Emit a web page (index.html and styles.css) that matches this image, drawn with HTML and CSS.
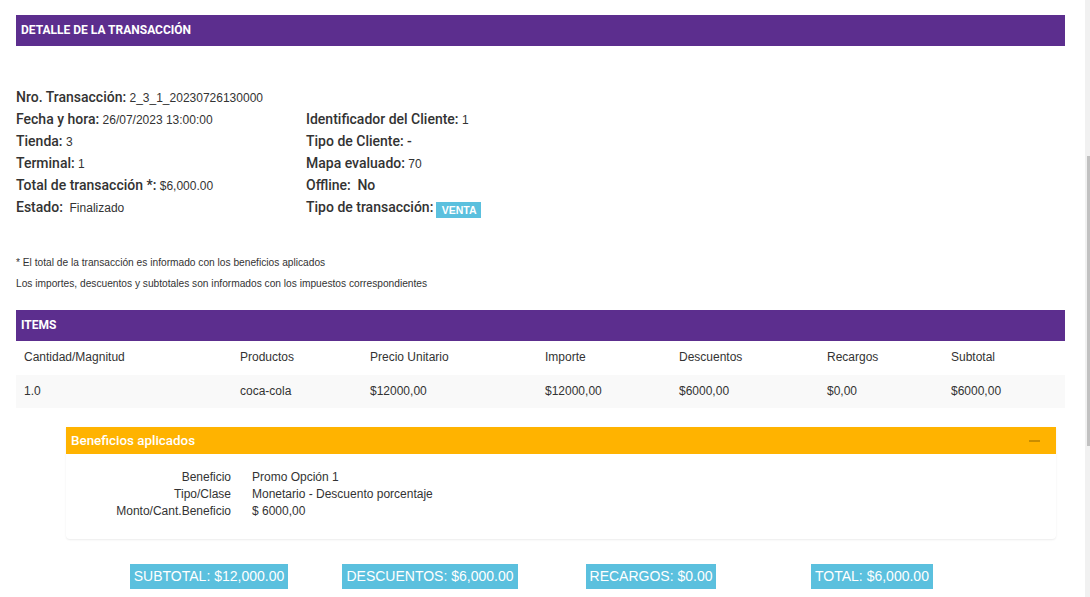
FILE: index.html
```html
<!DOCTYPE html>
<html lang="es">
<head>
<meta charset="utf-8">
<title>Detalle de la transacción</title>
<link rel="stylesheet" href="styles.css">
</head>
<body>
<div class="page">
  <main class="content">
    <div class="bar">DETALLE DE LA TRANSACCIÓN</div>

    <div class="info">
      <div class="info-col">
        <div class="row"><span class="lbl">Nro. Transacción:</span> <span class="val">2_3_1_20230726130000</span></div>
        <div class="row"><span class="lbl">Fecha y hora:</span> <span class="val">26/07/2023 13:00:00</span></div>
        <div class="row"><span class="lbl">Tienda:</span> <span class="val">3</span></div>
        <div class="row"><span class="lbl">Terminal:</span> <span class="val">1</span></div>
        <div class="row"><span class="lbl">Total de transacción *:</span> <span class="val">$6,000.00</span></div>
        <div class="row"><span class="lbl">Estado:</span>&nbsp; <span class="val">Finalizado</span></div>
      </div>
      <div class="info-col info-col-right">
        <div class="row"><span class="lbl">Identificador del Cliente:</span> <span class="val">1</span></div>
        <div class="row"><span class="lbl">Tipo de Cliente:</span> <span class="lbl">-</span></div>
        <div class="row"><span class="lbl">Mapa evaluado:</span> <span class="val">70</span></div>
        <div class="row"><span class="lbl">Offline:</span>&nbsp; <span class="lbl">No</span></div>
        <div class="row"><span class="lbl">Tipo de transacción:</span> <span class="badge">VENTA</span></div>
      </div>
    </div>

    <div class="notes">
      <p>* El total de la transacción es informado con los beneficios aplicados</p>
      <p>Los importes, descuentos y subtotales son informados con los impuestos correspondientes</p>
    </div>

    <div class="bar">ITEMS</div>
    <div class="table">
      <div class="trow thead">
        <div>Cantidad/Magnitud</div>
        <div>Productos</div>
        <div>Precio Unitario</div>
        <div>Importe</div>
        <div>Descuentos</div>
        <div>Recargos</div>
        <div>Subtotal</div>
      </div>
      <div class="trow tbody">
        <div>1.0</div>
        <div>coca-cola</div>
        <div>$12000,00</div>
        <div>$12000,00</div>
        <div>$6000,00</div>
        <div>$0,00</div>
        <div>$6000,00</div>
      </div>
    </div>

    <section class="benefits">
      <div class="benefits-head">
        <span class="benefits-title">Beneficios aplicados</span>
        <span class="minus"></span>
      </div>
      <dl class="benefits-body">
        <dt>Beneficio</dt><dd>Promo Opción 1</dd>
        <dt>Tipo/Clase</dt><dd>Monetario - Descuento porcentaje</dd>
        <dt>Monto/Cant.Beneficio</dt><dd>$ 6000,00</dd>
      </dl>
    </section>

    <div class="totals">
      <div class="cell"><span class="total">SUBTOTAL: $12,000.00</span></div>
      <div class="cell"><span class="total">DESCUENTOS: $6,000.00</span></div>
      <div class="cell"><span class="total">RECARGOS: $0.00</span></div>
      <div class="cell"><span class="total">TOTAL: $6,000.00</span></div>
    </div>
  </main>
  <div class="scrollbar"><div class="thumb"></div></div>
</div>
</body>
</html>
```

FILE: styles.css
```css
* { box-sizing: border-box; }

html, body {
  margin: 0;
  padding: 0;
  height: 100%;
  overflow: hidden;
  background: #fff;
}

body {
  font-family: "Liberation Sans", Arial, sans-serif;
  font-size: 12px;
  color: #333;
}

.page {
  display: flex;
  height: 597px;
}

.content {
  flex: 1;
  padding: 15px 20px 0 16px;
  min-width: 0;
}

.bar {
  background: #5c2e8e;
  color: #fff;
  font-family: Roboto, "Liberation Sans", sans-serif;
  font-weight: 700;
  font-size: 12px;
  height: 31px;
  line-height: 31px;
  padding-left: 5px;
}

.info {
  display: grid;
  grid-template-columns: 290px 1fr;
  margin-top: 40px;
}

.info-col-right { padding-top: 22px; }

.row {
  height: 22px;
  line-height: 22px;
  white-space: nowrap;
}

.lbl {
  font-family: Roboto, "Liberation Sans", sans-serif;
  font-weight: 500;
  font-size: 14px;
  color: #333;
}

.val { font-size: 12px; }

.badge {
  display: inline-block;
  background: #5bc0de;
  color: #fff;
  font-weight: 700;
  font-size: 10.5px;
  line-height: 16px;
  height: 16px;
  padding: 0 5px 0 6px;
  vertical-align: -2px;
  margin-left: -1px;
}

.notes {
  margin-top: 34px;
  margin-bottom: 16px;
  font-size: 10.2px;
}

.notes p {
  margin: 0;
  line-height: 21px;
}

.table { font-size: 12px; }

.trow {
  display: grid;
  grid-template-columns: 216px 130px 175px 134px 148px 124px 1fr;
}

.trow > div { padding-left: 8px; }

.thead {
  height: 34px;
  line-height: 32px;
}

.tbody {
  height: 33px;
  line-height: 32px;
  background: #f9f9f9;
}

.benefits {
  margin: 19px 9px 0 50px;
  border-radius: 0 0 4px 4px;
  box-shadow: 0 1px 2px rgba(0, 0, 0, 0.08);
}

.benefits-head {
  display: flex;
  align-items: center;
  justify-content: space-between;
  height: 27px;
  background: #ffb300;
  padding: 0 16px 0 5px;
}

.benefits-title {
  font-family: Roboto, "Liberation Sans", sans-serif;
  font-weight: 500;
  font-size: 13.4px;
  color: #fff;
}

.minus {
  width: 11px;
  height: 2px;
  background: #c98d00;
}

.benefits-body {
  display: grid;
  grid-template-columns: 165px 1fr;
  column-gap: 21px;
  margin: 0;
  padding: 15px 0 19px;
  font-size: 12px;
  line-height: 17px;
}

.benefits-body dt { text-align: right; }
.benefits-body dd { margin: 0; }

.totals {
  display: grid;
  grid-template-columns: repeat(4, 221px);
  padding-left: 82.5px;
  margin-top: 25px;
}

.cell {
  display: flex;
  justify-content: center;
}

.total {
  display: block;
  background: #5bc0de;
  color: #fff;
  font-size: 14px;
  height: 25px;
  line-height: 25px;
  padding: 0 4px;
  white-space: nowrap;
}

.scrollbar {
  width: 5px;
  flex: none;
  background: #f1f1f1;
  padding-left: 2px;
}

.thumb {
  margin-top: 156px;
  height: 290px;
  background: #c1c1c1;
}
```
